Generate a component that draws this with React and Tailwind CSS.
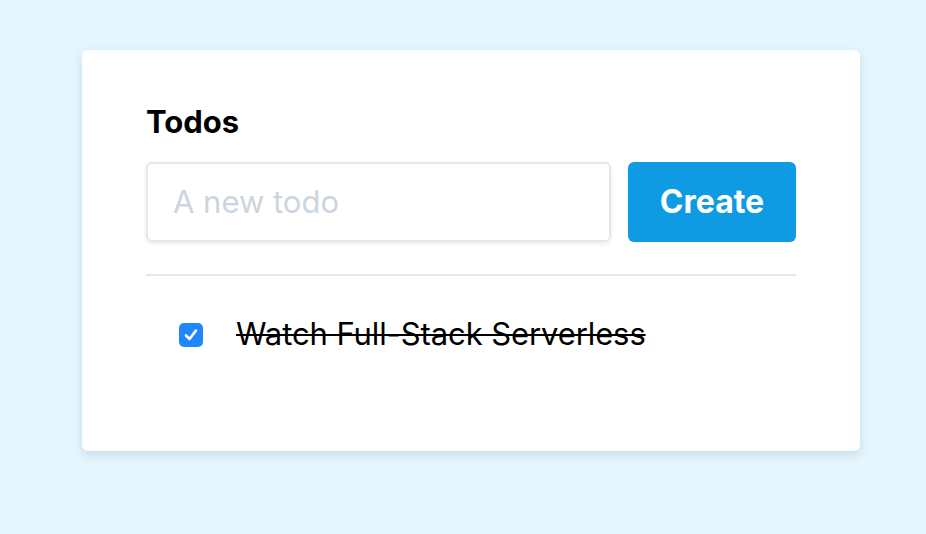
import React from "react";

export default function App() {
  return (
    <div className="min-h-[534px] w-full bg-[#e6f6fe] pt-[50px] px-[82px]" style={{ fontFamily: "Inter, 'Noto Sans', sans-serif" }}>
      <div className="w-[778px] h-[401px] bg-white rounded-md shadow-[0_4px_10px_rgba(100,140,170,0.25)] px-16 pt-[54px]">
        <h1 className="text-[31px] leading-[36px] font-bold text-black">Todos</h1>
        <div className="flex gap-[17px] mt-[22px]">
          <div className="flex-1 h-[80px] border-2 border-[#e2e8f0] rounded-md shadow-[0_2px_4px_rgba(0,0,0,0.08)] flex items-center px-[25px]">
            <span className="text-[31px] text-[#cbd5e0]">A new todo</span>
          </div>
          <button className="w-[168px] h-[80px] bg-[#0f9ae4] rounded-md text-white font-bold text-[32px]">
            Create
          </button>
        </div>
        <div className="mt-[32px] h-[2px] bg-[#e2e8f0]" />
        <div className="flex items-center mt-[38px] pl-[33px]">
          <div className="w-[24px] h-[24px] rounded-[5px] bg-[#1f86fb] flex items-center justify-center mt-[2px]">
            <svg width="18" height="18" viewBox="0 0 18 18" fill="none">
              <path d="M4 9.5 L7.5 13 L14 4.5" stroke="white" strokeWidth="2.6" strokeLinecap="round" strokeLinejoin="round" />
            </svg>
          </div>
          <span className="ml-[33px] text-[31px] leading-[40px] text-black line-through decoration-2 tracking-[-0.1px]">Watch Full-Stack Serverless</span>
        </div>
      </div>
    </div>
  );
}
